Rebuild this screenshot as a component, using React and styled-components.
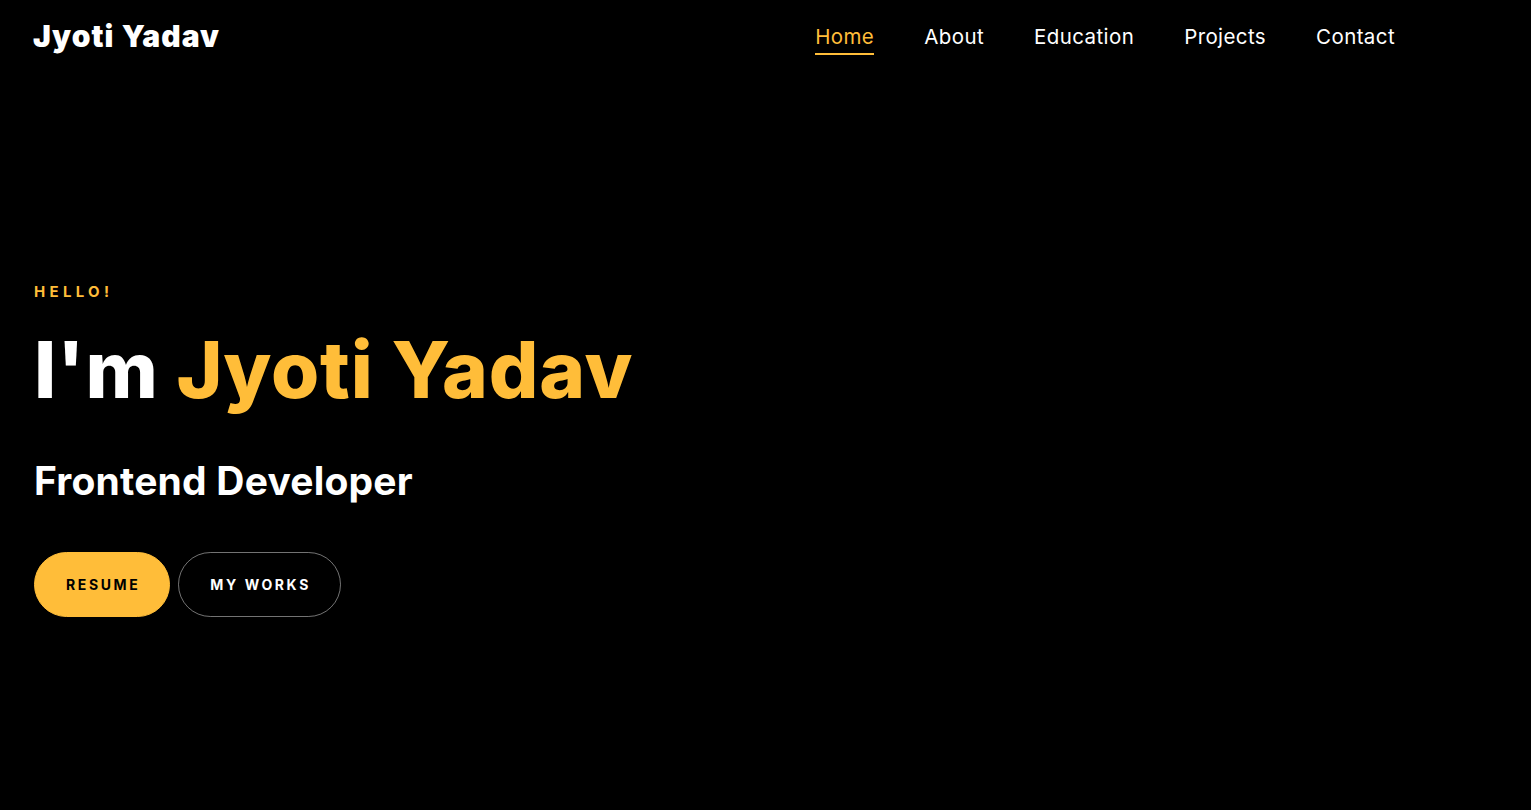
import React from 'react';
import styled, { createGlobalStyle } from 'styled-components';

const yellow = '#ffbd39';

const Global = createGlobalStyle`
  html, body {
    margin: 0;
    padding: 0;
    background: #000;
  }
  body {
    font-family: Inter, "Noto Sans", sans-serif;
    color: #fff;
  }
`;

const Page = styled.div`
  min-height: 810px;
  background: #000;
  display: flex;
  flex-direction: column;
`;

const Header = styled.header`
  display: flex;
  align-items: center;
  justify-content: space-between;
  padding: 11px 111px 0 33px;
  height: 50px;
`;

const Logo = styled.a`
  font-size: 30px;
  font-weight: 900;
  color: #fff;
  letter-spacing: 1.1px;
  text-decoration: none;
`;

const Nav = styled.nav`
  display: flex;
  align-items: center;
`;

const NavLink = styled.a`
  position: relative;
  margin: 0 25px;
  padding: 6px 0 6px;
  font-size: 20.5px;
  font-weight: 400;
  letter-spacing: 0.4px;
  color: ${(p) => (p.$active ? yellow : '#fff')};
  text-decoration: none;

  &::after {
    content: '';
    position: absolute;
    left: 0;
    right: 0;
    bottom: 0;
    height: 2px;
    background: ${yellow};
    display: ${(p) => (p.$active ? 'block' : 'none')};
  }
`;

const Hero = styled.section`
  display: flex;
  flex-direction: column;
  align-items: flex-start;
  padding: 221px 34px 0;
`;

const Kicker = styled.span`
  font-size: 15px;
  font-weight: 700;
  letter-spacing: 4.3px;
  color: ${yellow};
`;

const Title = styled.h1`
  margin: 26px 0 0;
  font-size: 78px;
  line-height: 1.1;
  font-weight: 800;
  letter-spacing: 0.8px;
  color: #fff;

  span {
    color: ${yellow};
  }
`;

const Subtitle = styled.h2`
  margin: 44px 0 0;
  font-size: 39px;
  font-weight: 700;
  letter-spacing: 0.2px;
  color: #fff;
`;

const Actions = styled.div`
  display: flex;
  gap: 8px;
  margin-top: 48px;
`;

const Button = styled.a`
  display: inline-flex;
  align-items: center;
  justify-content: center;
  box-sizing: border-box;
  height: 65px;
  padding: 0 29px 0 31px;
  border-radius: 33px;
  font-size: 14px;
  font-weight: 700;
  letter-spacing: 2.6px;
  text-decoration: none;
  background: ${(p) => (p.$primary ? yellow : 'transparent')};
  color: ${(p) => (p.$primary ? '#000' : '#fff')};
  border: 1px solid ${(p) => (p.$primary ? yellow : 'rgba(255,255,255,0.45)')};
`;

const links = ['Home', 'About', 'Education', 'Projects', 'Contact'];

export default function App() {
  return (
    <Page>
      <Global />
      <Header>
        <Logo href="#">Jyoti Yadav</Logo>
        <Nav>
          {links.map((l, i) => (
            <NavLink key={l} href="#" $active={i === 0}>
              {l}
            </NavLink>
          ))}
        </Nav>
      </Header>
      <Hero>
        <Kicker>HELLO!</Kicker>
        <Title>
          I'm <span>Jyoti Yadav</span>
        </Title>
        <Subtitle>Frontend Developer</Subtitle>
        <Actions>
          <Button href="#" $primary>
            RESUME
          </Button>
          <Button href="#">MY WORKS</Button>
        </Actions>
      </Hero>
    </Page>
  );
}
